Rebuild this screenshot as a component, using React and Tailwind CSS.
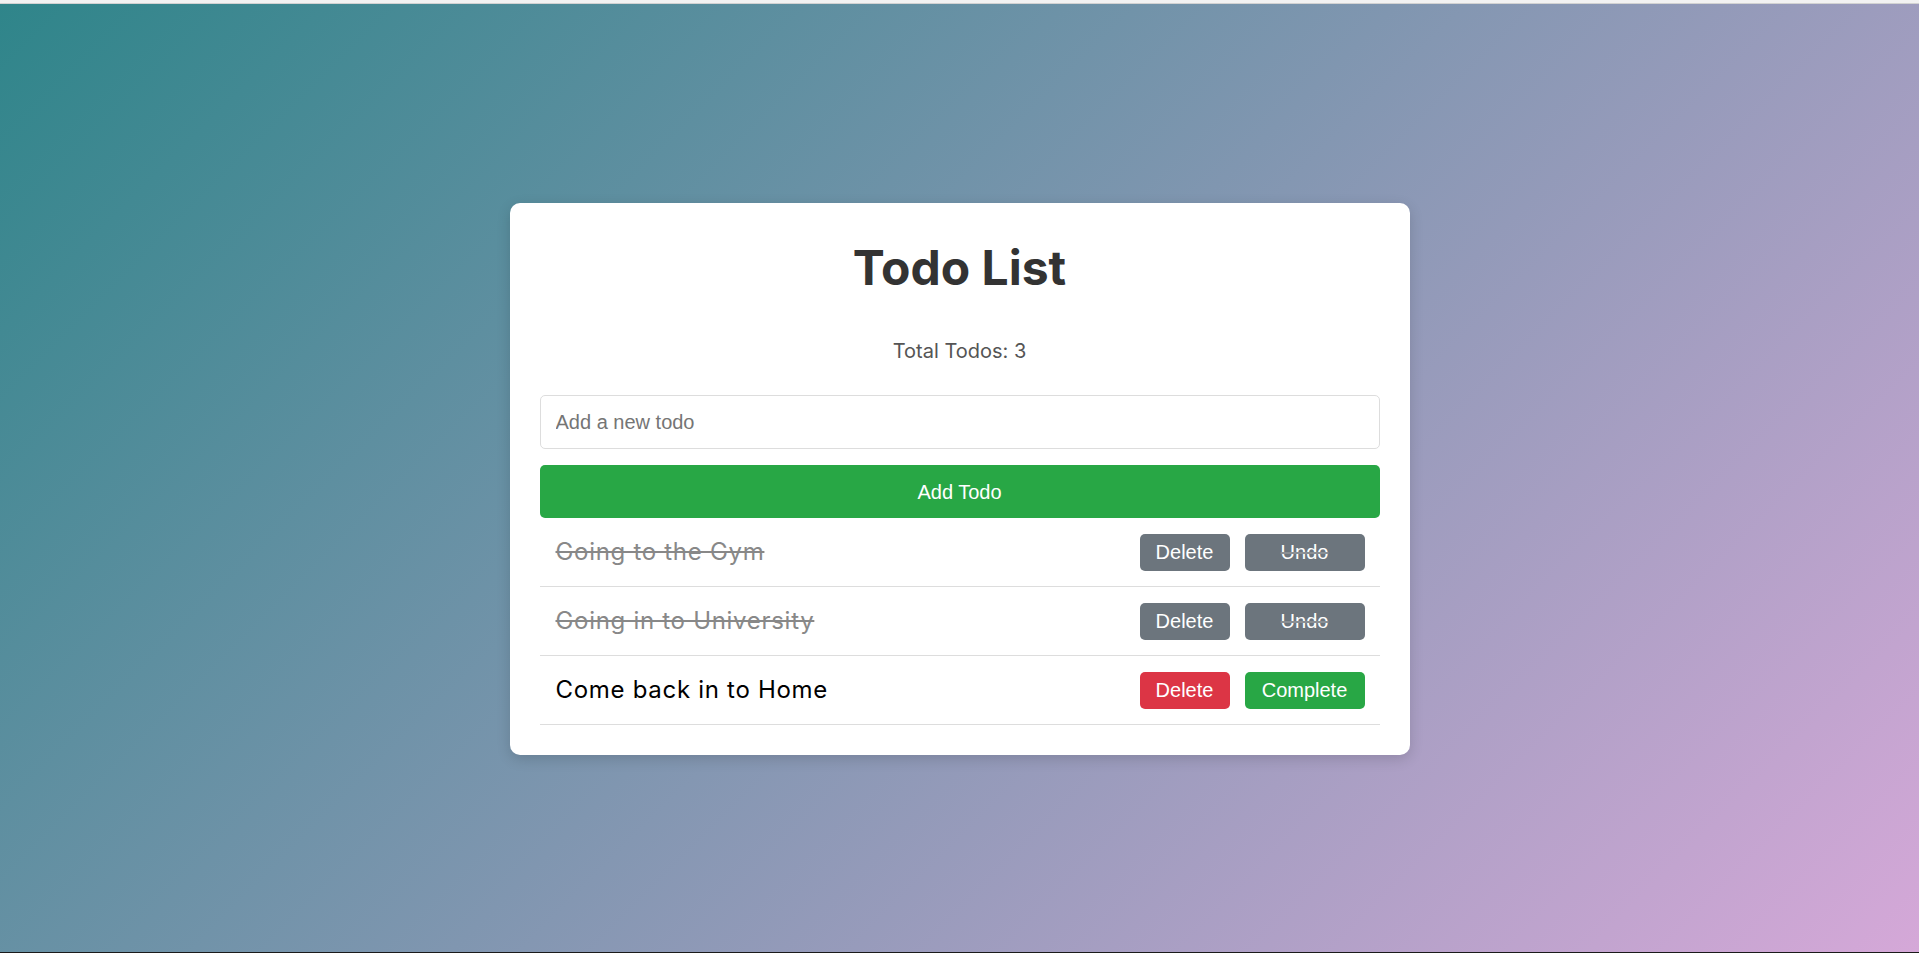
import React, { useState } from "react";

const initialTodos = [
  { id: 1, text: "Going to the Gym", done: true },
  { id: 2, text: "Going in to University", done: true },
  { id: 3, text: "Come back in to Home", done: false },
];

const App = () => {
  const [todos, setTodos] = useState(initialTodos);
  const [value, setValue] = useState("");

  const addTodo = () => {
    if (!value.trim()) return;
    setTodos([...todos, { id: Date.now(), text: value, done: false }]);
    setValue("");
  };

  const toggle = (id) =>
    setTodos(todos.map((t) => (t.id === id ? { ...t, done: !t.done } : t)));

  const remove = (id) => setTodos(todos.filter((t) => t.id !== id));

  return (
    <div className="h-[953px] flex flex-col overflow-hidden">
      {/* top strip */}
      <div className="h-[3px] bg-[#f2f2f2]" />
      <div className="h-px bg-[#d2d2d2]" />

      {/* Background + card */}
      <main className="flex-1 flex items-center justify-center pt-[2px] bg-[linear-gradient(135deg,#2f858a,#d5a8d8)]">
        <div className="w-[900px] bg-white rounded-[10px] px-[30px] pt-[30px] pb-[30px] shadow-[0_4px_14px_rgba(0,0,0,0.15)] font-['Inter',sans-serif]">
          <h1 className="mt-[11px] text-[48px] leading-[48px] font-bold text-[#333333] text-center">
            Todo List
          </h1>
          <p className="mt-[49px] text-[20px] leading-[20px] text-[#555555] text-center">
            Total Todos: {todos.length}
          </p>

          <input
            type="text"
            value={value}
            onChange={(e) => setValue(e.target.value)}
            placeholder="Add a new todo"
            className="mt-[34px] block w-full h-[54px] px-[15px] border border-[#dddddd] rounded-[5px] font-['Liberation_Sans',Arial,sans-serif] text-[20px] text-[#333] placeholder:text-[#757575] focus:outline-none"
          />
          <button
            onClick={addTodo}
            className="mt-[16px] block w-full h-[53px] bg-[#28a745] text-white rounded-[5px] font-['Liberation_Sans',Arial,sans-serif] text-[20px]"
          >
            Add Todo
          </button>

          <ul>
            {todos.map((todo) => (
              <li
                key={todo.id}
                className="h-[69px] flex items-center justify-between pl-[16px] pr-[15px] border-b border-[#dddddd]"
              >
                <span
                  className={
                    todo.done
                      ? "text-[24px] tracking-[0.7px] text-[#888888] line-through"
                      : "text-[24px] tracking-[0.7px] text-black"
                  }
                >
                  {todo.text}
                </span>
                <div className="flex items-center gap-[15px] font-['Liberation_Sans',Arial,sans-serif] text-[20px] text-white">
                  <button
                    onClick={() => remove(todo.id)}
                    className={
                      todo.done
                        ? "w-[90px] h-[37px] rounded-[5px] bg-[#6c757d]"
                        : "w-[90px] h-[37px] rounded-[5px] bg-[#dc3545]"
                    }
                  >
                    Delete
                  </button>
                  <button
                    onClick={() => toggle(todo.id)}
                    className={
                      todo.done
                        ? "w-[120px] h-[37px] rounded-[5px] bg-[#6c757d] line-through decoration-[#8a8f94]"
                        : "w-[120px] h-[37px] rounded-[5px] bg-[#28a745]"
                    }
                  >
                    {todo.done ? "Undo" : "Complete"}
                  </button>
                </div>
              </li>
            ))}
          </ul>
        </div>
      </main>

      <div className="h-px bg-[#1a1a1a]" />
    </div>
  );
};

export default App;
